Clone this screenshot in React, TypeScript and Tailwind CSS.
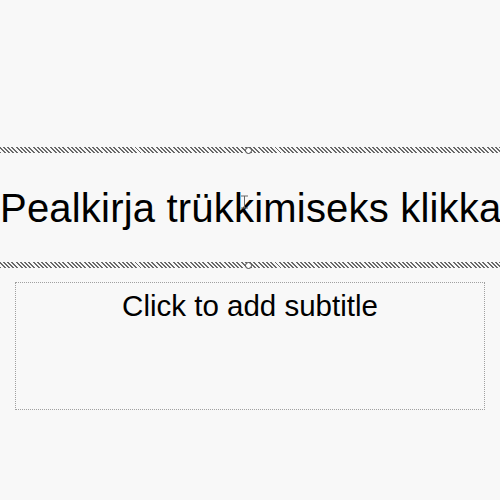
import React from 'react';

// Hatched selection frame edge, with a resize handle in the middle
function HatchBand() {
  return (
    <div className="relative h-[6px] w-full bg-[repeating-linear-gradient(45deg,#6a6a6a_0px,#6a6a6a_1.4px,transparent_1.4px,transparent_3px)]">
      <div className="absolute left-[245px] top-[-0.5px] h-[7px] w-[7px] rounded-full border border-[#444] bg-white" />
    </div>
  );
}

export default function App() {
  return (
    <div
      className="flex h-[500px] w-[500px] flex-col overflow-hidden bg-[#f8f8f8] pt-[147px]"
      style={{ fontFamily: '"Liberation Sans", Arial, sans-serif' }}
    >
      <HatchBand />
      <div className="relative flex h-[109px] items-center overflow-hidden whitespace-nowrap">
        <span className="text-[40px] leading-none tracking-[0.2px] text-black">Pealkirja trükkimiseks klikka</span>
        {/* text cursor */}
        <svg className="absolute left-[240px] top-[42px]" width="9" height="14" viewBox="0 0 9 14">
          <path d="M1 1h7M4.5 1v12M1 13h7" stroke="#666" strokeWidth="1" fill="none" />
        </svg>
      </div>
      <HatchBand />
      <div className="mx-[15px] mt-[14px] flex h-[128px] justify-center border border-dotted border-[#a0a0a0] pt-[6px]">
        <span className="text-[29.5px] leading-[34px] text-black">Click to add subtitle</span>
      </div>
    </div>
  );
}
